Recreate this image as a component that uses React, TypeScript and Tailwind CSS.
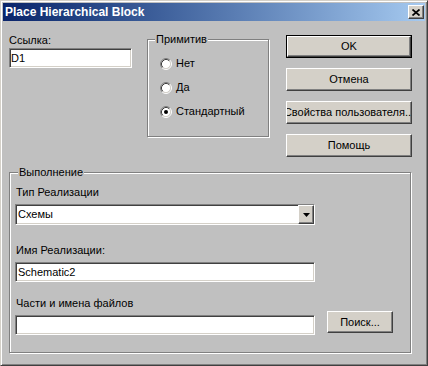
import React from 'react'

const font = { fontFamily: '"Liberation Sans", Arial, sans-serif' }

const raised =
  'border border-t-white border-l-white border-b-[#404040] border-r-[#404040] shadow-[inset_-1px_-1px_0_#808080] bg-[#d4d0c8]'
const sunken =
  'border border-t-[#808080] border-l-[#808080] border-b-white border-r-white shadow-[inset_1px_1px_0_#404040,inset_-1px_-1px_0_#d4d0c8] bg-white'
const etched = 'border border-[#808080] shadow-[inset_1px_1px_0_#fff,1px_1px_0_#fff]'

function Radio({ checked }: { checked?: boolean }) {
  return (
    <svg width="12" height="12" viewBox="0 0 12 12" className="shrink-0">
      <circle cx="6" cy="6" r="4.5" fill="#fff" />
      <path d="M2.11 9.89A5.5 5.5 0 0 1 9.89 2.11" stroke="#808080" fill="none" />
      <path d="M9.89 2.11A5.5 5.5 0 0 1 2.11 9.89" stroke="#fff" fill="none" />
      <path d="M2.82 9.18A4.5 4.5 0 0 1 9.18 2.82" stroke="#404040" fill="none" />
      <path d="M9.18 2.82A4.5 4.5 0 0 1 2.82 9.18" stroke="#d4d0c8" fill="none" />
      {checked && <circle cx="6" cy="6" r="2" fill="#000" />}
    </svg>
  )
}

function Button({ label, isDefault, className = '' }: { label: string; isDefault?: boolean; className?: string }) {
  if (isDefault) {
    return (
      <div className={`flex border border-black ${className}`}>
        <div className={`flex flex-1 items-center justify-center overflow-hidden whitespace-nowrap ${raised}`}>{label}</div>
      </div>
    )
  }
  return (
    <div className={`flex items-center justify-center overflow-hidden whitespace-nowrap ${raised} ${className}`}>
      {label}
    </div>
  )
}

function Field({ value = '', className = '', pad = 'pl-[2px]' }: { value?: string; className?: string; pad?: string }) {
  return <div className={`flex items-center ${pad} ${sunken} ${className}`}>{value}</div>
}

export default function App() {
  return (
    <div
      className="w-[428px] h-[366px] p-[2px] bg-[#c0c0c0] border border-t-[#d4d0c8] border-l-[#d4d0c8] border-b-[#404040] border-r-[#404040] shadow-[inset_1px_1px_0_#fff,inset_-1px_-1px_0_#808080] text-[11px] leading-[13px] text-black flex flex-col"
      style={font}
    >
      {/* title bar */}
      <div className="h-[18px] shrink-0 flex items-center pl-[2px] pr-[1px] bg-gradient-to-r from-[#0a246a] to-[#a6caf0]">
        <span className="flex-1 text-white font-bold text-[12px]">Place Hierarchical Block</span>
        <div className={`w-[16px] h-[14px] flex items-center justify-center ${raised}`}>
          <svg width="8" height="7" viewBox="0 0 8 7">
            <path d="M0.5 0.5L7.5 6.5M7.5 0.5L0.5 6.5" stroke="#000" strokeWidth="1.7" />
          </svg>
        </div>
      </div>

      {/* top row */}
      <div className="h-[136px] shrink-0 flex items-start pl-[6px]">
        <div className="mt-[13px] w-[123px] flex flex-col">
          <span>Ссылка:</span>
          <Field value="D1" pad="pl-[1px]" className="mt-[1px] h-[20px]" />
        </div>

        <div className={`relative ml-[15px] mt-[18px] w-[122px] h-[98px] ${etched}`}>
          <span className="absolute left-[7px] top-[-7px] px-px bg-[#c0c0c0]">Примитив</span>
          <div className="flex flex-col gap-[11px] pt-[17px] pl-[12px]">
            {[
              { label: 'Нет', checked: false },
              { label: 'Да', checked: false },
              { label: 'Стандартный', checked: true },
            ].map((r) => (
              <div key={r.label} className="h-[13px] flex items-center gap-[4px]">
                <Radio checked={r.checked} />
                <span>{r.label}</span>
              </div>
            ))}
          </div>
        </div>

        <div className="ml-[17px] mt-[14px] w-[126px] flex flex-col gap-[10px]">
          <Button label="OK" isDefault className="h-[23px]" />
          <Button label="Отмена" className="h-[23px]" />
          <Button label="Свойства пользователя..." className="h-[23px]" />
          <Button label="Помощь" className="h-[23px]" />
        </div>
      </div>

      {/* Выполнение group */}
      <div className={`relative ml-[6px] mt-[15px] w-[402px] h-[181px] ${etched}`}>
        <span className="absolute left-[8px] top-[-7px] px-px bg-[#c0c0c0]">Выполнение</span>
        <div className="flex flex-col pt-[13px] pl-[5px]">
          <span className="ml-[1px]">Тип Реализации</span>
          <div className={`mt-[5px] w-[300px] h-[21px] flex items-stretch ${sunken}`}>
            <span className="flex-1 flex items-center pl-[2px]">Схемы</span>
            <div className={`w-[16px] flex items-center justify-center ${raised}`}>
              <svg width="7" height="4" viewBox="0 0 7 4">
                <polygon points="0,0 7,0 3.5,4" fill="#000" />
              </svg>
            </div>
          </div>

          <span className="ml-[1px] mt-[19px]">Имя Реализации:</span>
          <Field value="Schematic2" className="mt-[5px] w-[300px] h-[20px]" />

          <span className="ml-[1px] mt-[15px]">Части и имена файлов</span>
          <div className="mt-[1px] flex items-start">
            <Field className="mt-[4px] w-[300px] h-[20px]" />
            <Button label="Поиск..." className="ml-[12px] w-[66px] h-[22px]" />
          </div>
        </div>
      </div>
    </div>
  )
}
